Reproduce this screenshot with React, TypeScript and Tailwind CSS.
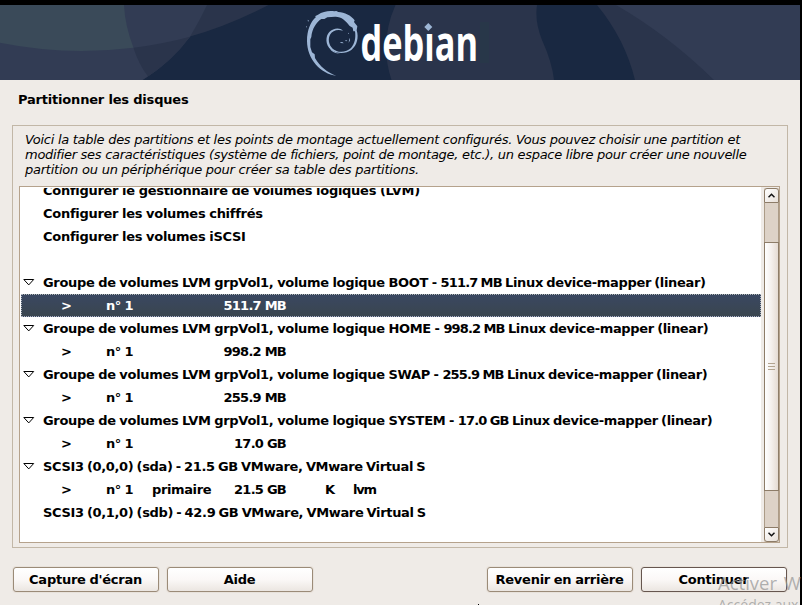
import type { ReactNode } from 'react';

type Item = {
  kind: 'action' | 'disk' | 'group' | 'part' | 'blank';
  label?: string;
  open?: boolean;
  selected?: boolean;
  type?: string;
  size?: string;
  fs?: string;
  flag?: string;
};

const items: Item[] = [
  { kind: 'action', label: 'Configurer le gestionnaire de volumes logiques (LVM)' },
  { kind: 'action', label: 'Configurer les volumes chiffrés' },
  { kind: 'action', label: 'Configurer les volumes iSCSI' },
  { kind: 'blank' },
  { kind: 'group', open: true, label: 'BOOT', size: '511.7 MB' },
  { kind: 'part', size: '511.7 MB', selected: true },
  { kind: 'group', open: true, label: 'HOME', size: '998.2 MB' },
  { kind: 'part', size: '998.2 MB' },
  { kind: 'group', open: true, label: 'SWAP', size: '255.9 MB' },
  { kind: 'part', size: '255.9 MB' },
  { kind: 'group', open: true, label: 'SYSTEM', size: '17.0 GB' },
  { kind: 'part', size: '17.0 GB' },
  { kind: 'disk', open: true, label: 'SCSI3 (0,0,0) (sda) - 21.5 GB VMware, VMware Virtual S' },
  { kind: 'part', type: 'primaire', size: '21.5 GB', flag: 'K', fs: 'lvm' },
  { kind: 'disk', label: 'SCSI3 (0,1,0) (sdb) - 42.9 GB VMware, VMware Virtual S' },
];

function Banner() {
  return (
    <svg className="block h-[75px] w-[800px] shrink-0" viewBox="0 5 800 75">
      <rect y="5" width="800" height="75" fill="#192841" />
      <path d="M0 5H268.5Q228 26 190 36.500L148 76.500L142.500 80H0Z" fill="#2a344b" />
      <path d="M0 5H207Q199 22 190 36.700Q170 63 142.500 80H0Z" fill="#323c54" />
      <path d="M190 36.700Q163 44 133.500 47.700Q138 63 148 76.500Q173 60 190 36.700Z" fill="#2a344b" />
      <path d="M0 5H124Q125 26 133.500 47.700Q66 56 0 42.700Z" fill="#3a4a59" />
      <path d="M395.500 5H537Q534.500 21 542 40Q552 62 554 80H391.500Q379 42 395.500 5Z" fill="#2a344b" />
      <path d="M480 22h9v41h-9z" fill="#283749" />
      <path d="M597 5H800V80H635Q625 39 597 5Z" fill="#2a344b" />
      <path d="M616 5H800V80H714Q668 35 616 5Z" fill="#323c54" />
      <g transform="translate(290 0) scale(.33333)" fill="#9db6d6">
        <path d="M139 227C92 222 51 177 51 123C51 91 61 66 78 51L75 49L84 44C98 35 117 31 133 34L139 33L145 36C164 37 183 46 194 61L192 66L202 79L200 91C207 112 201 137 184 150C168 162 140 162 124 150C105 136 106 108 118 96C129 84 150 82 159 92C142 87 127 92 121 103C113 116 116 135 128 146C143 160 170 157 183 144C194 132 198 113 195 94L190 94L188 83L179 78C168 62 153 49 135 50L112 52L103 57L94 57C79 66 66 87 64 111L61 118V141L66 157L74 163L75 174C89 199 112 218 139 227Z" />
        <path d="M119 141Q128 156 151 162L137 159Q121 154 119 141ZM178 113l2 8-4 8zM164 122l8-2-3 4zM151 126l7 1 3 3-9-1zM53 59l4 3-3 3zM48 78l3 2-2 3zM174 100l3-2-1 5z" />
      </g>
      <text x="360.500" y="61" fill="#fff" fontFamily="Open Sans, sans-serif" fontSize="48.500" fontWeight="700" textLength="117.500" lengthAdjust="spacingAndGlyphs">debian</text>
      <path d="M423 20h12v13.200h-12z" fill="#2a344b" />
      <path d="M428.300 23l4 4-4 4-4-4z" fill="#9db6d6" />
    </svg>
  );
}

function Label({ item }: { item: Item }) {
  if (item.kind === 'group') {
    return (
      <span className="tracking-[-0.32px] [word-spacing:-0.5px]">
        Groupe de volumes LVM grpVol1, volume logique {item.label} -{' '}
        <span className="tracking-[-0.85px]">{item.size}</span>
        <span className="tracking-[-0.34px] [word-spacing:-0.9px]"> Linux device-mapper (linear)</span>
      </span>
    );
  }
  if (item.kind === 'disk') {
    return <span className="tracking-[-0.34px] [word-spacing:-0.98px]">{item.label}</span>;
  }
  return <span className="tracking-[-0.28px] [word-spacing:-0.4px]">{item.label}</span>;
}

function Row({ item }: { item: Item }) {
  if (item.kind === 'blank') return <div className="h-[23px] shrink-0" />;
  if (item.kind === 'part') {
    const tone = item.selected
      ? 'border border-dotted border-[#aeb4c0] bg-linear-to-b from-[#3a4761] to-[#3a464f] pl-[39px] text-white'
      : 'pl-[40px]';
    return (
      <div className={`ml-px flex h-[23px] w-[740px] shrink-0 items-center ${tone}`}>
        <span className="w-[45px]">&gt;</span>
        <span className="w-[46px] tracking-[-0.6px]">n° 1</span>
        <span className="w-[60px] tracking-[-0.38px]">{item.type}</span>
        <span className="w-[74px] text-right tracking-[-0.75px]">{item.size}</span>
        <span className="w-[67px] pl-[39px]">{item.flag}</span>
        <span className="tracking-[-1.2px]">{item.fs}</span>
      </div>
    );
  }
  return (
    <div className="flex h-[23px] shrink-0 items-center">
      <span className="flex w-[23px] shrink-0 pl-[3px]">
        {item.open && (
          <svg className="h-[7px] w-3" viewBox="0 0 12 7" fill="none" stroke="#000">
            <path d="M.8.500H10.700L5.750 5.900Z" />
          </svg>
        )}
      </span>
      <Label item={item} />
    </div>
  );
}

function Arrow({ down }: { down?: boolean }) {
  return (
    <div className={`flex h-[15px] w-[15px] shrink-0 items-center justify-center border border-[#8d7c68] bg-linear-to-br from-white to-[#e8e0d9] ${down ? 'rounded-b-[3px]' : 'rounded-t-[3px]'}`}>
      <svg className="h-[5px] w-[7px]" viewBox="0 0 7 5" fill="none" stroke="#111" strokeWidth="1.5">
        <path d={down ? 'M.5.700L3.500 3.700L6.500.700' : 'M.5 4.300L3.500 1.300L6.500 4.300'} />
      </svg>
    </div>
  );
}

function Button({ children, focus }: { children: ReactNode; focus?: boolean }) {
  return (
    <button className={`h-[25px] w-[146px] rounded-[3px] border bg-linear-to-b from-white via-[#fbf8f7] to-[#ebe6e1] pr-px pb-px text-[13px] leading-none font-bold tracking-[-0.25px] whitespace-nowrap [word-spacing:-0.5px] shadow-[0_0_0_1px_#e8e2db] ${focus ? 'border-[#66564f]' : 'border-[#9b8b78]'}`}>
      {children}
    </button>
  );
}

export default function App() {
  return (
    <div className="relative h-[605px] w-[802px] overflow-hidden bg-black pt-[5px] font-['DejaVu_Sans',sans-serif] text-[13px] text-black">
      <div className="flex h-[600px] w-[800px] flex-col bg-[#efebe7]">
        <Banner />
        <h1 className="mt-[11px] ml-[18px] h-[17px] text-[13px] leading-[17px] font-bold tracking-[-0.19px]">Partitionner les disques</h1>
        <main className="mt-[17px] ml-3 flex h-[423px] w-[776px] shrink-0 flex-col border border-[#c2b7a7] px-[6px] pt-[6px]">
          <p className="ml-[6px] h-[54px] leading-[15px] tracking-[-0.28px] whitespace-nowrap italic">
            Voici la table des partitions et les points de montage actuellement configurés. Vous pouvez choisir une partition et
            <br />
            modifier ses caractéristiques (système de fichiers, point de montage, etc.), un espace libre pour créer une nouvelle
            <br />
            <span className="tracking-[-0.23px]">partition ou un périphérique pour créer sa table des partitions.</span>
          </p>
          <div className="flex h-[357px] w-[761px] border border-[#b5a28c] bg-[#efebe7]">
            <div className="flex w-[741px] flex-col overflow-hidden border-t border-white bg-white font-bold whitespace-nowrap">
              <div className="-mt-[9px] flex flex-col">
                {items.map((item, i) => <Row key={i} item={item} />)}
              </div>
            </div>
            <div className="mt-px ml-[3px] flex h-[354px] w-[15px] flex-col bg-[#ddd2c7]">
              <Arrow />
              <div className="h-[39px] border-x border-[#ab9b87]" />
              <div className="flex h-[249px] flex-col items-center justify-center gap-[2px] border border-[#8d7c68] bg-linear-to-r from-white via-[#f4efec] to-[#e5dbd3]">
                <div className="h-px w-[7px] bg-[#b3a48f]" />
                <div className="h-px w-[7px] bg-[#b3a48f]" />
                <div className="h-px w-[7px] bg-[#b3a48f]" />
              </div>
              <div className="flex-1 border-x border-[#ab9b87]" />
              <Arrow down />
            </div>
          </div>
        </main>
        <footer className="mt-[19px] ml-[13px] flex gap-2">
          <Button>Capture d'écran</Button>
          <Button>Aide</Button>
          <div className="w-[158px]" />
          <Button>Revenir en arrière</Button>
          <Button focus>Continuer</Button>
        </footer>
      </div>
      <div className="absolute top-[572px] left-[718px] font-['Open_Sans',sans-serif] whitespace-nowrap text-[#999]/75">
        <div className="text-[18.5px] leading-[22px] [word-spacing:2px]">Activer W</div>
        <div className="mt-[2px] text-[14px] leading-[18px]">Accédez aux</div>
      </div>
      <div className="absolute top-[604px] left-[478px] h-px w-px bg-black" />
    </div>
  );
}
